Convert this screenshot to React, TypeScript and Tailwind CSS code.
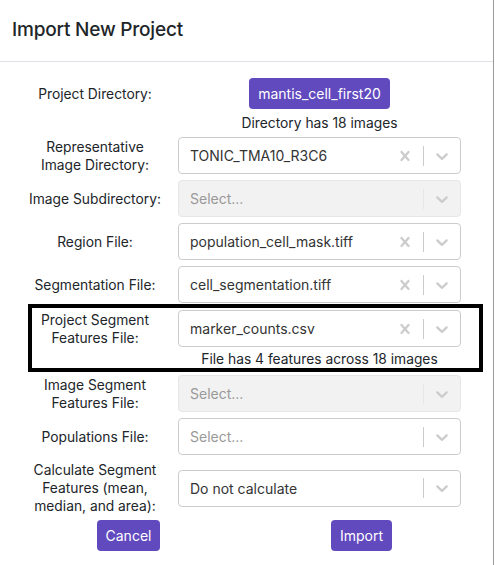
import React from 'react';

const font = { fontFamily: 'Inter, "Liberation Sans", Arial, sans-serif' };

const ClearIcon = () => (
  <svg viewBox="0 0 20 20" width="20" height="20" fill="#cccccc">
    <path d="M14.348 14.849c-0.469 0.469-1.229 0.469-1.697 0l-2.651-3.030-2.651 3.029c-0.469 0.469-1.229 0.469-1.697 0-0.469-0.469-0.469-1.229 0-1.697l2.758-3.15-2.759-3.152c-0.469-0.469-0.469-1.228 0-1.697s1.228-0.469 1.697 0l2.652 3.031 2.651-3.031c0.469-0.469 1.228-0.469 1.697 0s0.469 1.229 0 1.697l-2.758 3.152 2.758 3.15c0.469 0.469 0.469 1.229 0 1.698z" />
  </svg>
);

const ChevronIcon = () => (
  <svg viewBox="0 0 20 20" width="20" height="20" fill="#cccccc">
    <path d="M4.516 7.548c0.436-0.446 1.043-0.481 1.576 0l3.908 3.747 3.908-3.747c0.533-0.481 1.141-0.446 1.574 0 0.436 0.445 0.408 1.197 0 1.615-0.406 0.418-4.695 4.502-4.695 4.502-0.217 0.223-0.502 0.335-0.787 0.335s-0.57-0.112-0.789-0.335c0 0-4.287-4.084-4.695-4.502s-0.436-1.17 0-1.615z" />
  </svg>
);

type SelectProps = { value?: string; disabled?: boolean; clearable?: boolean };

const Select = ({ value, disabled, clearable }: SelectProps) => (
  <div
    className={`flex h-[37px] w-[283px] items-center rounded-[4px] border ${
      disabled ? 'border-[#e6e6e6] bg-[#f2f2f2]' : 'border-[#cccccc] bg-white'
    }`}
  >
    <div className={`flex-1 truncate pl-[11px] text-[14px] ${value ? 'text-[#333333]' : 'text-[#999999]'}`}>
      {value ?? 'Select...'}
    </div>
    {clearable && value && (
      <div className="flex h-full w-[36px] items-center justify-center">
        <ClearIcon />
      </div>
    )}
    <div className={`h-[20px] w-px ${disabled ? 'bg-[#e6e6e6]' : 'bg-[#cccccc]'}`} />
    <div className="flex h-full w-[36px] items-center justify-center">
      <ChevronIcon />
    </div>
  </div>
);

const Label = ({ children, width = 150 }: { children: React.ReactNode; width?: number }) => (
  <div className="text-center text-[13.8px] leading-[18px] text-[#212529]" style={{ width }}>
    {children}
  </div>
);

const Row = ({ label, children }: { label: React.ReactNode; children: React.ReactNode }) => (
  <div className="flex items-center gap-2">
    <Label>{label}</Label>
    {children}
  </div>
);

export default function App() {
  return (
    <div className="h-[565px] w-[495px] bg-white" style={font}>
      <div className="h-full w-[494px] border-r border-[#9a9a9a]">
        <div className="flex h-[62px] items-center border-b border-[#dee2e6] px-[12px]">
          <h1 className="text-[19px] font-medium tracking-[-0.2px] text-[#212529]">Import New Project</h1>
        </div>

        <div className="pl-[20px] pt-[16px]">
          <Row label="Project Directory:">
            <div className="flex w-[283px] justify-center">
              <button className="h-[31px] rounded-[4px] bg-[#6149be] px-[9px] text-[14px] text-white">
                mantis_cell_first20
              </button>
            </div>
          </Row>
          <div className="ml-[158px] mt-[5px] w-[283px] text-center text-[13.8px] leading-[18px] text-[#212529]">
            Directory has 18 images
          </div>

          <div className="mt-[5px] flex flex-col gap-[6px]">
            <Row label={<>Representative<br />Image Directory:</>}>
              <Select value="TONIC_TMA10_R3C6" clearable />
            </Row>
            <Row label="Image Subdirectory:">
              <Select disabled />
            </Row>
            <Row label="Region File:">
              <Select value="population_cell_mask.tiff" clearable />
            </Row>
            <Row label="Segmentation File:">
              <Select value="cell_segmentation.tiff" clearable />
            </Row>
          </div>

          <div className="ml-[8px] mt-px w-[455px] border-4 border-black pt-[2px]">
            <div className="flex items-center gap-[20px]">
              <Label width={126}>Project Segment<br />Features File:</Label>
              <Select value="marker_counts.csv" clearable />
            </div>
            <div className="ml-[146px] mt-[4px] w-[283px] text-center text-[13.8px] leading-[17px] text-[#212529]">
              File has 4 features across 18 images
            </div>
          </div>

          <div className="mt-[3px] flex flex-col gap-[6px]">
            <Row label={<>Image Segment<br />Features File:</>}>
              <Select disabled />
            </Row>
            <Row label="Populations File:">
              <Select />
            </Row>
            <Row label={<>Calculate Segment<br />Features (mean,<br />median, and area):</>}>
              <Select value="Do not calculate" />
            </Row>
          </div>
        </div>

        <div className="ml-[12px] mt-[5px] grid w-[466px] grid-cols-2">
          <div className="flex justify-center">
            <button className="h-[31px] rounded-[4px] bg-[#6149be] px-[9px] text-[14px] text-white">Cancel</button>
          </div>
          <div className="flex justify-center">
            <button className="h-[31px] rounded-[4px] bg-[#6149be] px-[9px] text-[14px] text-white">Import</button>
          </div>
        </div>
      </div>
    </div>
  );
}
